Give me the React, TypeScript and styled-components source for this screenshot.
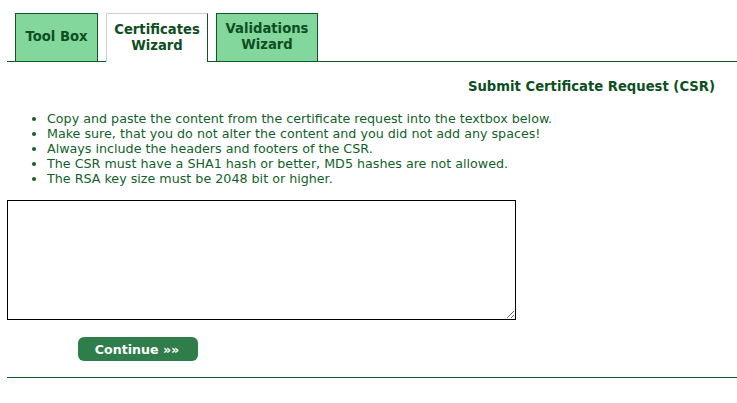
import React from "react";
import styled, { createGlobalStyle } from "styled-components";

const Global = createGlobalStyle`
  html, body { margin: 0; padding: 0; background: #fff; }
  body { font-family: "DejaVu Sans", Verdana, sans-serif; color: #0e5a27; }
`;

const Page = styled.div`
  padding: 13px 0 0 7px;
  width: 730px;
`;

const TabBar = styled.div`
  display: flex;
  align-items: flex-end;
  gap: 8px;
  padding-left: 8px;
  border-bottom: 1px solid #0b5a25;
  height: 48px;
`;

const Tab = styled.div<{ $active?: boolean; $wide?: boolean }>`
  box-sizing: border-box;
  width: ${(p) => (p.$active || p.$wide ? 102 : 83)}px;
  height: ${(p) => (p.$active ? 49 : 48)}px;
  margin-bottom: ${(p) => (p.$active ? -1 : 0)}px;
  display: flex;
  align-items: center;
  justify-content: center;
  text-align: center;
  font-weight: bold;
  font-size: 13.2px;
  line-height: 16px;
  color: #0d4f22;
  background: ${(p) => (p.$active ? "#fff" : "#84d79c")};
  border: 1px solid #0b5a25;
  border-bottom: none;
  padding-bottom: 1px;
  ${(p) => p.$active && `border-top-color: #c8d0d4; border-left-color: #c8d0d4;`}
`;

const Heading = styled.h2`
  margin: 17px 22px 0 0;
  text-align: right;
  font-size: 13.2px;
  font-weight: bold;
  line-height: 16px;
  color: #0d4f22;
`;

const Rules = styled.ul`
  margin: 16px 0 0 0;
  padding-left: 40px;
  font-size: 12.7px;
  line-height: 15px;
  color: #135f2a;
`;

const Rule = styled.li``;

const CsrBox = styled.textarea`
  display: block;
  box-sizing: border-box;
  margin-top: 14px;
  width: 509px;
  height: 120px;
  border: 1px solid #000;
  padding: 2px;
  font-family: "DejaVu Sans Mono", monospace;
  font-size: 12px;
`;

const Actions = styled.div`
  padding: 17px 0 0 71px;
`;

const Continue = styled.button`
  box-sizing: border-box;
  width: 120px;
  height: 24px;
  border: none;
  border-radius: 6px;
  background: #2f7d4b;
  color: #fff;
  font-family: "DejaVu Sans", Verdana, sans-serif;
  font-weight: bold;
  font-size: 12.6px;
  padding: 0 2px 0 0;
  cursor: pointer;
`;

const Divider = styled.hr`
  margin: 16px 0 0 0;
  border: none;
  border-top: 1px solid #0b5a25;
  height: 0;
`;

export default function App() {
  return (
    <>
      <Global />
      <Page>
        <TabBar>
          <Tab>Tool Box</Tab>
          <Tab $active>
            Certificates
            <br />
            Wizard
          </Tab>
          <Tab $wide>
            Validations
            <br />
            Wizard
          </Tab>
        </TabBar>
        <Heading>Submit Certificate Request (CSR)</Heading>
        <Rules>
          <Rule>Copy and paste the content from the certificate request into the textbox below.</Rule>
          <Rule>Make sure, that you do not alter the content and you did not add any spaces!</Rule>
          <Rule>Always include the headers and footers of the CSR.</Rule>
          <Rule>The CSR must have a SHA1 hash or better, MD5 hashes are not allowed.</Rule>
          <Rule>The RSA key size must be 2048 bit or higher.</Rule>
        </Rules>
        <CsrBox />
        <Actions>
          <Continue>Continue »»</Continue>
        </Actions>
        <Divider />
      </Page>
    </>
  );
}
